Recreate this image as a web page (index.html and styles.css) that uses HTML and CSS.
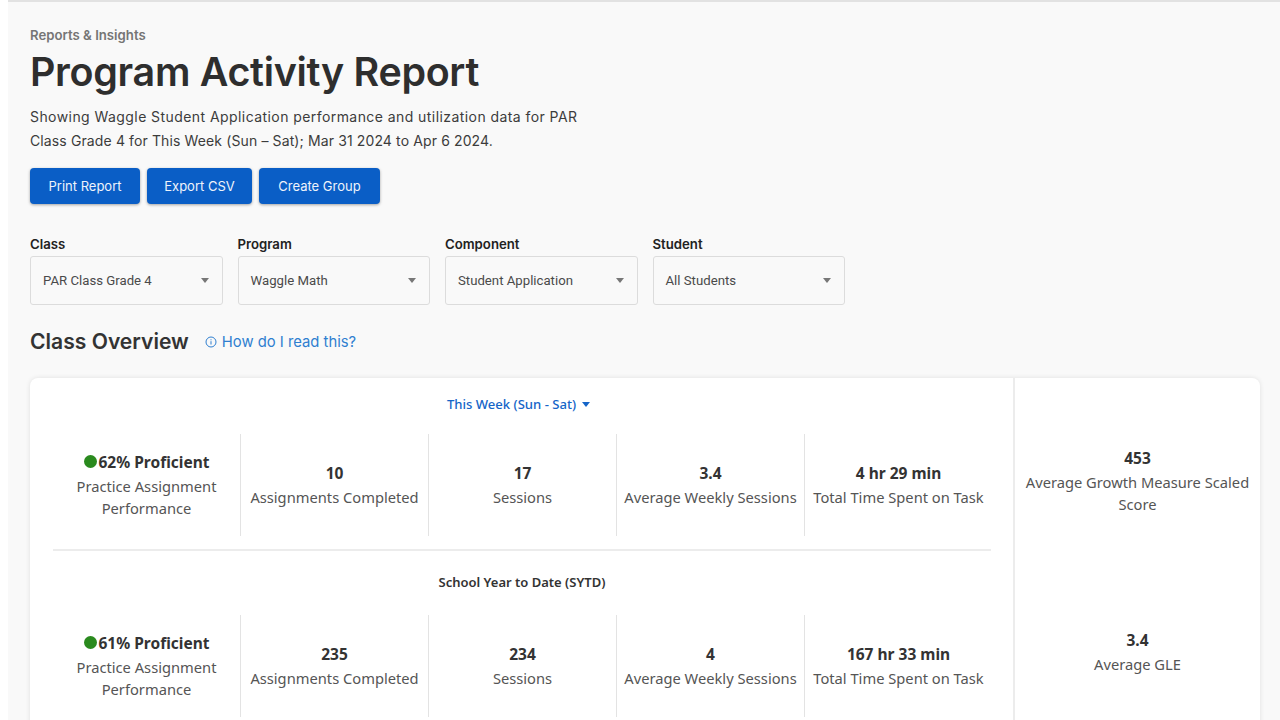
FILE: index.html
```html
<!DOCTYPE html>
<html lang="en">
<head>
<meta charset="utf-8">
<title>Program Activity Report</title>
<link rel="stylesheet" href="styles.css">
</head>
<body>
<main class="page">
  <p class="crumb">Reports &amp; Insights</p>
  <h1 class="title">Program Activity Report</h1>
  <p class="intro"><span class="intro-first">Showing Waggle Student Application performance and utilization data for PAR</span><span class="intro-second">Class Grade 4 for This Week (Sun – Sat); Mar 31 2024 to Apr 6 2024.</span></p>
  <div class="actions">
    <button class="btn">Print Report</button>
    <button class="btn btn-narrow">Export CSV</button>
    <button class="btn btn-wide">Create Group</button>
  </div>
  <div class="filters">
    <div class="filter"><span class="filter-label">Class</span><div class="select"><span>PAR Class Grade 4</span><i class="caret"></i></div></div>
    <div class="filter"><span class="filter-label">Program</span><div class="select"><span>Waggle Math</span><i class="caret"></i></div></div>
    <div class="filter"><span class="filter-label">Component</span><div class="select"><span>Student Application</span><i class="caret"></i></div></div>
    <div class="filter"><span class="filter-label">Student</span><div class="select"><span>All Students</span><i class="caret"></i></div></div>
  </div>
  <div class="section-head">
    <h2 class="section-title">Class Overview</h2>
    <a class="help">
      <svg class="help-icon" viewBox="0 0 12 12" width="12" height="12" aria-hidden="true"><circle cx="6" cy="6" r="5" fill="none" stroke="currentColor" stroke-width="1"/><rect x="5.5" y="5.2" width="1" height="3.3" fill="currentColor"/><rect x="5.5" y="3.3" width="1" height="1" fill="currentColor"/></svg>
      How do I read this?
    </a>
  </div>
  <section class="card">
    <div class="card-main">
      <div class="period period-link">This Week (Sun - Sat)<i class="caret caret-blue"></i></div>
      <div class="stats">
        <div class="stat"><div class="stat-value"><i class="dot"></i>62% Proficient</div><div class="stat-label">Practice Assignment Performance</div></div>
        <div class="stat"><div class="stat-value">10</div><div class="stat-label">Assignments Completed</div></div>
        <div class="stat"><div class="stat-value">17</div><div class="stat-label">Sessions</div></div>
        <div class="stat"><div class="stat-value">3.4</div><div class="stat-label">Average Weekly Sessions</div></div>
        <div class="stat"><div class="stat-value">4 hr 29 min</div><div class="stat-label">Total Time Spent on Task</div></div>
      </div>
      <hr class="divider">
      <div class="period period-plain">School Year to Date (SYTD)</div>
      <div class="stats">
        <div class="stat"><div class="stat-value"><i class="dot"></i>61% Proficient</div><div class="stat-label">Practice Assignment Performance</div></div>
        <div class="stat"><div class="stat-value">235</div><div class="stat-label">Assignments Completed</div></div>
        <div class="stat"><div class="stat-value">234</div><div class="stat-label">Sessions</div></div>
        <div class="stat"><div class="stat-value">4</div><div class="stat-label">Average Weekly Sessions</div></div>
        <div class="stat"><div class="stat-value">167 hr 33 min</div><div class="stat-label">Total Time Spent on Task</div></div>
      </div>
    </div>
    <aside class="card-side">
      <div class="side-item side-top"><div class="stat-value">453</div><div class="stat-label">Average Growth Measure Scaled Score</div></div>
      <div class="side-item side-bottom"><div class="stat-value">3.4</div><div class="stat-label">Average GLE</div></div>
    </aside>
  </section>
</main>
</body>
</html>
```
FILE: styles.css
```css
* { box-sizing: border-box; }
html, body { margin: 0; height: 720px; overflow: hidden; background: #fff; }
body { padding-left: 8px; font-family: "Noto Sans", sans-serif; color: #333; }
.page {
  height: 720px;
  background: #f9f9f9;
  border-top: 2px solid #e2e2e2;
  padding: 26px 20px 0 22px;
  overflow: hidden;
}
.crumb { margin: 0; font: 600 13.2px/15px Inter, sans-serif; color: #757575; }
.title { margin: 4px 0 0; font: 600 39.4px/50px Inter, sans-serif; color: #2e2e2e; letter-spacing: -.3px; }
.intro { margin: 8px 0 0; font: 400 14px/24px Inter, sans-serif; color: #3c3c3c; }
.intro-first, .intro-second { display: block; white-space: nowrap; }
.intro-first { letter-spacing: .43px; }
.intro-second { letter-spacing: .12px; }
.actions { display: flex; gap: 7px; margin-top: 15px; }
.btn {
  width: 110px;
  height: 36px;
  padding: 0;
  border: 0;
  border-radius: 4px;
  background: #0a5ec6;
  color: #eef3fb;
  font: 400 13px Inter, sans-serif;
  box-shadow: 0 1px 3px rgba(0,0,0,.35);
}
.btn-narrow { width: 105px; }
.btn-wide { width: 121px; }
.filters { display: flex; gap: 15px; margin-top: 32px; }
.filter { width: 192.5px; }
.filter-label { display: block; font: 600 13.2px/16px Inter, sans-serif; color: #222; }
.select {
  display: flex;
  align-items: center;
  justify-content: space-between;
  height: 49px;
  margin-top: 4px;
  padding: 0 13px 0 12px;
  border: 1px solid #dcdcdc;
  border-radius: 3px;
  font: 400 13.2px Roboto, sans-serif;
  color: #4a4a4a;
}
.caret {
  width: 0;
  height: 0;
  border-left: 4.5px solid transparent;
  border-right: 4.5px solid transparent;
  border-top: 5px solid #777;
}
.section-head { display: flex; align-items: center; gap: 16px; margin-top: 23px; }
.section-title { margin: 0; font: 600 21.1px/28px Inter, sans-serif; color: #333; }
.help { display: flex; align-items: center; gap: 5px; margin-bottom: 1px; font: 400 14.8px Inter, sans-serif; color: #2f7fd0; }
.card {
  display: flex;
  height: 420px;
  margin-top: 22px;
  background: #fff;
  border-radius: 8px;
  box-shadow: 0 0 5px rgba(0,0,0,.1);
}
.card-main { width: 985px; padding: 0 22px 0 23px; border-right: 2px solid #ececec; flex: none; }
.card-side { flex: 1; text-align: center; }
.period { text-align: center; }
.period-link { display: flex; justify-content: center; align-items: center; gap: 6px; margin-top: 18px; padding-right: 7px; font: 500 13.1px/16px "Noto Sans", sans-serif; color: #1565c8; }
.caret-blue { border-top-color: #1565c8; }
.period-plain { margin-top: 23px; font: 600 13px/16px "Noto Sans", sans-serif; color: #333; }
.stats { display: grid; grid-template-columns: 187px repeat(4, 188px); margin-top: 22px; height: 102px; }
.period-plain + .stats { margin-top: 25px; }
.stat { display: flex; flex-direction: column; justify-content: center; align-items: center; text-align: center; padding: 0 5px 2px; border-left: 1px solid #e3e3e3; }
.stat:first-child { border-left: 0; padding: 0 12px 2px; }
.stat-value { display: flex; align-items: center; justify-content: center; margin-bottom: 1px; font: 700 15.5px/24px "Noto Sans", sans-serif; color: #333; white-space: nowrap; }
.stat-label { font: 400 14.7px/22px "Noto Sans", sans-serif; color: #555; }
.dot { width: 13px; height: 13px; margin-right: 2px; border-radius: 50%; background: #2a8a1e; }
.divider { height: 2px; margin: 13px 0 0; border: 0; background: #ececec; }
.side-item { padding: 0 10px; }
.side-top { margin-top: 68px; }
.side-bottom { margin-top: 113px; }
```
